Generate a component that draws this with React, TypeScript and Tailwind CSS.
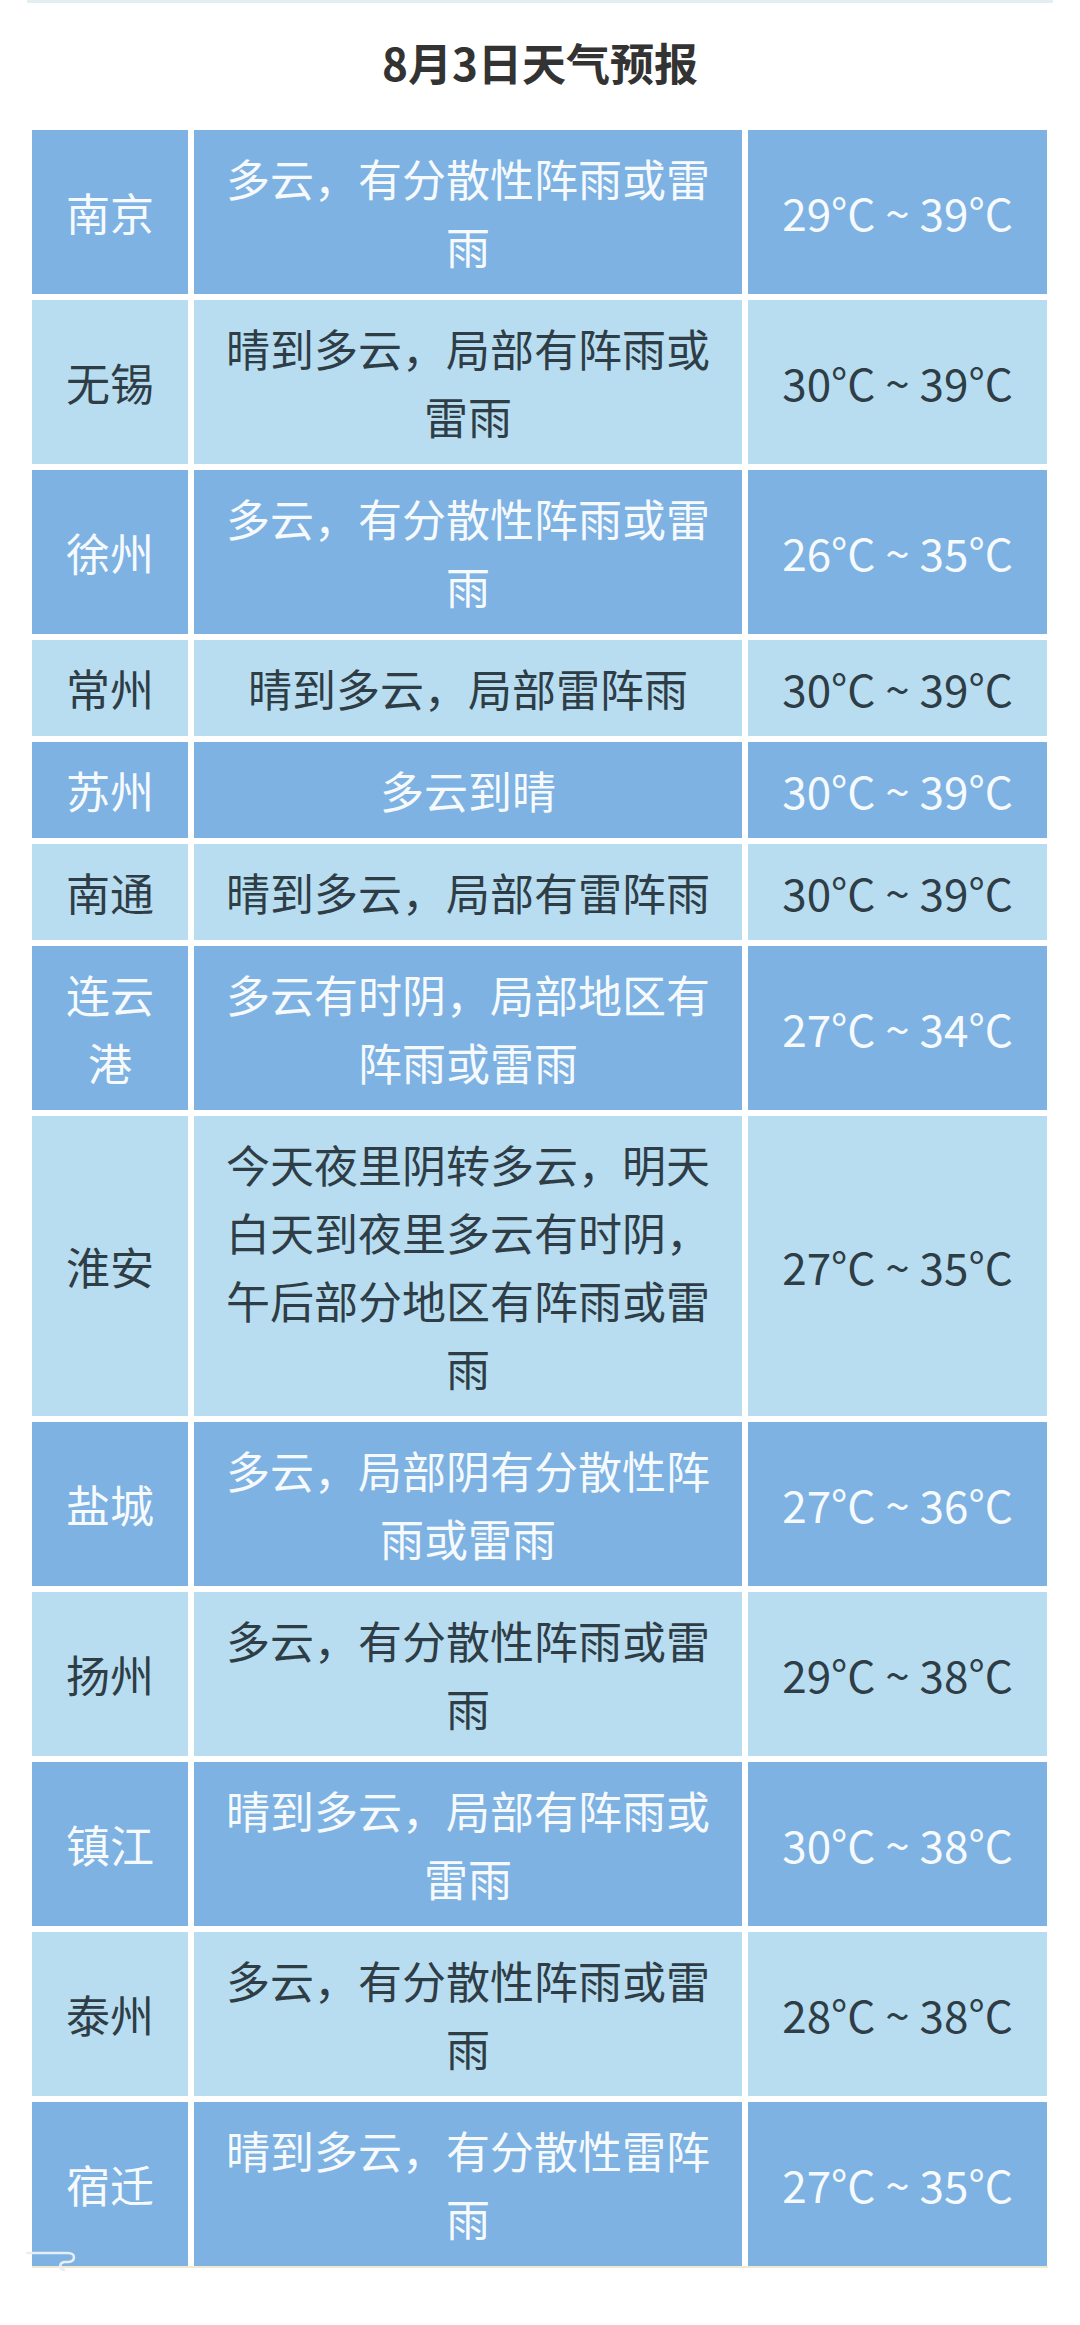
const rows = [
  { city: "南京", desc: "多云，有分散性阵雨或雷雨", temp: "29°C ~ 39°C" },
  { city: "无锡", desc: "晴到多云，局部有阵雨或雷雨", temp: "30°C ~ 39°C" },
  { city: "徐州", desc: "多云，有分散性阵雨或雷雨", temp: "26°C ~ 35°C" },
  { city: "常州", desc: "晴到多云，局部雷阵雨", temp: "30°C ~ 39°C" },
  { city: "苏州", desc: "多云到晴", temp: "30°C ~ 39°C" },
  { city: "南通", desc: "晴到多云，局部有雷阵雨", temp: "30°C ~ 39°C" },
  { city: "连云港", desc: "多云有时阴，局部地区有阵雨或雷雨", temp: "27°C ~ 34°C" },
  {
    city: "淮安",
    desc: "今天夜里阴转多云，明天白天到夜里多云有时阴，午后部分地区有阵雨或雷雨",
    temp: "27°C ~ 35°C",
  },
  { city: "盐城", desc: "多云，局部阴有分散性阵雨或雷雨", temp: "27°C ~ 36°C" },
  { city: "扬州", desc: "多云，有分散性阵雨或雷雨", temp: "29°C ~ 38°C" },
  { city: "镇江", desc: "晴到多云，局部有阵雨或雷雨", temp: "30°C ~ 38°C" },
  { city: "泰州", desc: "多云，有分散性阵雨或雷雨", temp: "28°C ~ 38°C" },
  { city: "宿迁", desc: "晴到多云，有分散性雷阵雨", temp: "27°C ~ 35°C" },
]

export default function App() {
  return (
    <div className="relative w-[1080px] min-h-[2325px] bg-white font-['Noto_Sans_CJK_SC',sans-serif]">
      <div className="mx-[27px] h-[3px] bg-[#e3eef3]" />
      <h1 className="mt-[25px] text-center text-[44px] leading-[68px] font-bold text-[#333333]">
        8月3日天气预报
      </h1>
      <div className="mt-[34px] px-[32px] grid grid-cols-[156px_548px_299px] gap-[6px]">
        {rows.map((r, i) => {
          const dark = i % 2 === 0
          const cell = dark
            ? "bg-[#7db2e3] text-[#f6fafd]"
            : "bg-[#b9ddf0] text-[#2e3d46]"
          return [
            <div key={r.city + "c"} className={`${cell} flex items-center justify-center text-center px-[18px] py-[14px] text-[44px] leading-[68px]`}>
              {r.city}
            </div>,
            <div key={r.city + "d"} className={`${cell} flex items-center justify-center text-center px-[24px] py-[14px] text-[44px] leading-[68px]`}>
              {r.desc}
            </div>,
            <div key={r.city + "t"} className={`${cell} flex items-center justify-center text-center px-[10px] py-[14px] text-[44px] leading-[68px] whitespace-nowrap`}>
              {r.temp}
            </div>,
          ]
        })}
      </div>
      <div className="mx-[32px] h-[2px] bg-[#efe9d2]" />
      <svg
        className="absolute left-[26px] top-[2250px]"
        width="60"
        height="22"
        viewBox="0 0 60 22"
        fill="none"
      >
        <path
          d="M1 3 H42 C50 3 50 11 42 12 L38 12 C33 13 33 19 38 20"
          stroke="#e8eef4"
          strokeWidth="2.5"
          strokeLinecap="round"
        />
      </svg>
    </div>
  )
}
